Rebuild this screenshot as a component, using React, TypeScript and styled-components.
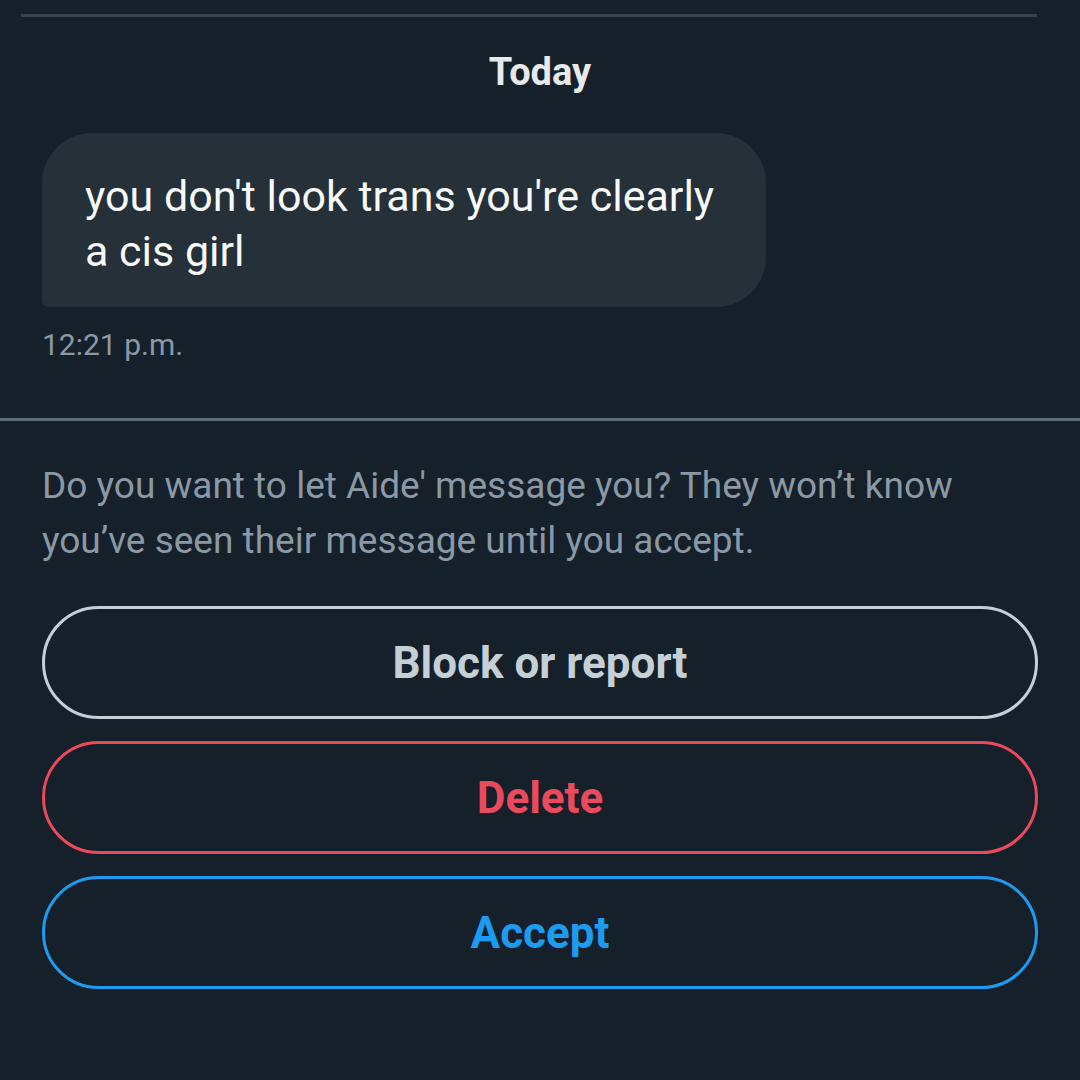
import React from "react";
import styled, { createGlobalStyle } from "styled-components";

const Global = createGlobalStyle`
  html, body { margin: 0; padding: 0; background: #15202b; }
  body { font-family: "Roboto", "Liberation Sans", sans-serif; }
`;

const Page = styled.div`
  width: 1080px;
  height: 1080px;
  background: #15202b;
  display: flex;
  flex-direction: column;
  overflow: hidden;
`;

const TopSection = styled.div`
  padding: 14px 43px 0 21px;
`;

const TopRule = styled.div`
  height: 3px;
  background: #38444d;
`;

const DayLabel = styled.div`
  margin-top: 35px;
  text-align: center;
  color: #e7e9ea;
  font-weight: 700;
  font-size: 38px;
  line-height: 40px;
`;

const Thread = styled.div`
  padding: 0 42px;
  display: flex;
  flex-direction: column;
  align-items: flex-start;
`;

const Bubble = styled.div`
  margin-top: 41px;
  width: 724px;
  box-sizing: border-box;
  padding: 36px 30px 28px 43px;
  background: #253038;
  border-radius: 50px 50px 50px 6px;
  color: #f7f9f9;
  font-size: 43px;
  line-height: 55px;
`;

const Time = styled.div`
  margin-top: 20px;
  color: #8b98a5;
  font-size: 30px;
  line-height: 36px;
`;

const Divider = styled.div`
  margin-top: 55px;
  height: 3px;
  background: #5b6b77;
`;

const Prompt = styled.div`
  padding: 37px 42px 0;
  color: #8b98a5;
  font-size: 37px;
  line-height: 55px;
`;

const Actions = styled.div`
  padding: 38px 42px 0 42px;
  display: flex;
  flex-direction: column;
  gap: 22px;
`;

const ActionButton = styled.button<{ $color: string }>`
  width: 996px;
  height: 113px;
  box-sizing: border-box;
  border: 3px solid ${(p) => p.$color};
  border-radius: 57px;
  background: transparent;
  color: ${(p) => p.$color};
  font-family: "Roboto", "Liberation Sans", sans-serif;
  font-weight: 700;
  font-size: 44px;
  display: flex;
  align-items: center;
  justify-content: center;
  padding: 0;
`;

export default function App() {
  return (
    <Page>
      <Global />
      <TopSection>
        <TopRule />
      </TopSection>
      <DayLabel>Today</DayLabel>
      <Thread>
        <Bubble>you don't look trans you're clearly a cis girl</Bubble>
        <Time>12:21 p.m.</Time>
      </Thread>
      <Divider />
      <Prompt>
        Do you want to let Aide' message you? They won’t know you’ve seen their message until you accept.
      </Prompt>
      <Actions>
        <ActionButton $color="#c4cfd6">Block or report</ActionButton>
        <ActionButton $color="#ea4a5c">Delete</ActionButton>
        <ActionButton $color="#1d9bf0">Accept</ActionButton>
      </Actions>
    </Page>
  );
}
